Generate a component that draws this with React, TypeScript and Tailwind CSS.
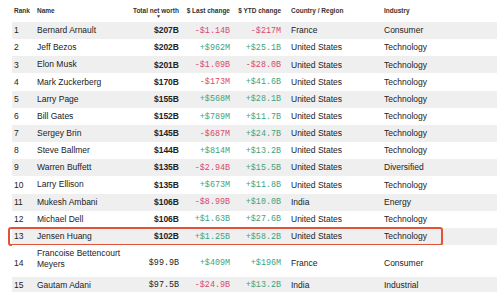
import React from 'react';

type Row = {
  rank: number;
  name: string;
  worth: string;
  last: string;
  ytd: string;
  country: string;
  industry: string;
};

const rows: Row[] = [
  { rank: 1, name: 'Bernard Arnault', worth: '$207B', last: '-$1.14B', ytd: '-$217M', country: 'France', industry: 'Consumer' },
  { rank: 2, name: 'Jeff Bezos', worth: '$202B', last: '+$962M', ytd: '+$25.1B', country: 'United States', industry: 'Technology' },
  { rank: 3, name: 'Elon Musk', worth: '$201B', last: '-$1.09B', ytd: '-$28.0B', country: 'United States', industry: 'Technology' },
  { rank: 4, name: 'Mark Zuckerberg', worth: '$170B', last: '-$173M', ytd: '+$41.6B', country: 'United States', industry: 'Technology' },
  { rank: 5, name: 'Larry Page', worth: '$155B', last: '+$568M', ytd: '+$28.1B', country: 'United States', industry: 'Technology' },
  { rank: 6, name: 'Bill Gates', worth: '$152B', last: '+$789M', ytd: '+$11.7B', country: 'United States', industry: 'Technology' },
  { rank: 7, name: 'Sergey Brin', worth: '$145B', last: '-$687M', ytd: '+$24.7B', country: 'United States', industry: 'Technology' },
  { rank: 8, name: 'Steve Ballmer', worth: '$144B', last: '+$814M', ytd: '+$13.2B', country: 'United States', industry: 'Technology' },
  { rank: 9, name: 'Warren Buffett', worth: '$135B', last: '-$2.94B', ytd: '+$15.5B', country: 'United States', industry: 'Diversified' },
  { rank: 10, name: 'Larry Ellison', worth: '$135B', last: '+$673M', ytd: '+$11.8B', country: 'United States', industry: 'Technology' },
  { rank: 11, name: 'Mukesh Ambani', worth: '$106B', last: '-$8.99B', ytd: '+$10.0B', country: 'India', industry: 'Energy' },
  { rank: 12, name: 'Michael Dell', worth: '$106B', last: '+$1.63B', ytd: '+$27.6B', country: 'United States', industry: 'Technology' },
  { rank: 13, name: 'Jensen Huang', worth: '$102B', last: '+$1.25B', ytd: '+$58.2B', country: 'United States', industry: 'Technology' },
  { rank: 14, name: 'Francoise Bettencourt Meyers', worth: '$99.9B', last: '+$409M', ytd: '+$196M', country: 'France', industry: 'Consumer' },
  { rank: 15, name: 'Gautam Adani', worth: '$97.5B', last: '-$24.9B', ytd: '+$13.2B', country: 'India', industry: 'Industrial' },
];

const cols = 'grid grid-cols-[25px_86px_56px_51px_51px_93px_123px]';
const mono = "font-['Liberation_Mono',monospace] text-[8.4px]";

const Change: React.FC<{ v: string }> = ({ v }) => (
  <span className={`${mono} ${v.startsWith('-') ? 'text-[#d9486a]' : 'text-[#3da37e]'}`}>{v}</span>
);

const App: React.FC = () => {
  return (
    <div className="w-[499px] h-[292px] overflow-hidden bg-white font-['Liberation_Sans',Arial,sans-serif] text-[8.5px] text-[#222]">
      <div className="ml-[12px] w-[485px]">
        <div className={`${cols} h-[22px] items-center text-[6.5px] font-semibold text-[#333]`}>
          <div className="pl-[2px]">Rank</div>
          <div>Name</div>
          <div className="relative text-right">
            <span className="whitespace-nowrap">Total net worth</span>
            <span className="absolute right-[18px] top-[8px] text-[5px] leading-none">▼</span>
          </div>
          <div className="text-right whitespace-nowrap">$ Last change</div>
          <div className="text-right whitespace-nowrap">$ YTD change</div>
          <div className="pl-[10px] whitespace-nowrap">Country / Region</div>
          <div className="pl-[10px]">Industry</div>
        </div>
        {rows.map((r, i) => {
          const two = r.rank === 14;
          const shade = i % 2 === 0 ? 'bg-[#efefef]' : 'bg-white';
          return (
            <div
              key={r.rank}
              className={`${cols} relative ${shade} ${two ? 'h-[31.5px] items-end pb-[7px]' : 'h-[17.17px] items-center'}`}
            >
              <div className="pl-[2px]">{r.rank}</div>
              <div className="leading-[11px] pr-[2px]">{r.name}</div>
              <div className="text-right">
                {r.worth.includes('.') ? (
                  <span className={mono}>{r.worth}</span>
                ) : (
                  <span className="font-bold">{r.worth}</span>
                )}
              </div>
              <div className="text-right">
                <Change v={r.last} />
              </div>
              <div className="text-right">
                <Change v={r.ytd} />
              </div>
              <div className="pl-[10px] whitespace-nowrap">{r.country}</div>
              <div className="pl-[10px]">{r.industry}</div>
              {r.rank === 13 && (
                <span className="pointer-events-none absolute left-[-4px] top-[-1px] h-[19px] w-[435px] rounded-[3px] border-2 border-[#e0523a]" />
              )}
            </div>
          );
        })}
      </div>
    </div>
  );
};

export default App;
